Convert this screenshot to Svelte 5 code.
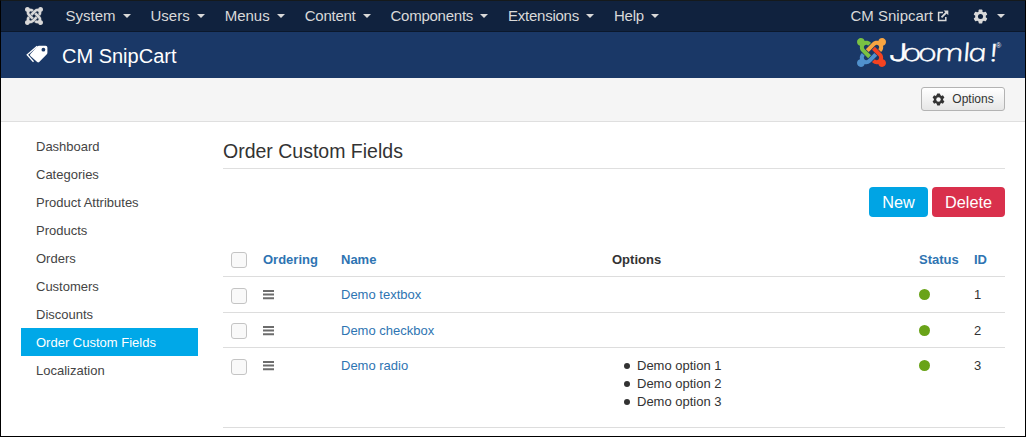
<script>
  const menus = ['System', 'Users', 'Menus', 'Content', 'Components', 'Extensions', 'Help'];
  const links = [
    'Dashboard', 'Categories', 'Product Attributes', 'Products', 'Orders',
    'Customers', 'Discounts', 'Order Custom Fields', 'Localization'
  ];
  const active = 'Order Custom Fields';
  const rows = [
    { id: 1, name: 'Demo textbox', options: [] },
    { id: 2, name: 'Demo checkbox', options: [] },
    { id: 3, name: 'Demo radio', options: ['Demo option 1', 'Demo option 2', 'Demo option 3'] }
  ];
  // One arm of the Joomla mark; the other three are quarter turns of it.
  const arm = 'M16.72 14.76L14.22 17.26l-2.37 2.37-.462.466c-1.368 1.365-3.297 1.83-5.047 1.397-.327 1.424-1.604 2.49-3.13 2.49C1.438 23.983 0 22.547 0 20.772c0-1.518 1.055-2.789 2.469-3.123-.446-1.76.016-3.705 1.396-5.08l.179-.18 2.37 2.37-.184.181c-.769.779-.769 2.024 0 2.789.771.78 2.022.78 2.787.015l.465-.465 2.367-2.371 2.502-2.506z';
  const brand = ['#5091cd', '#7ac143', '#f9a541', '#f44321'];
</script>

{#snippet mark(colors)}
  <svg class="mark" viewBox="0 0 24 24">
    {#each colors as c, i}
      <path d={arm} fill={c} transform="rotate({i * 90} 12 12)" />
    {/each}
  </svg>
{/snippet}

{#snippet gear()}
  <svg class="gear" viewBox="0 0 16 16">
    <g fill="currentColor">
      {#each [0, 60, 120] as a}
        <rect x="6" y="0.6" width="4" height="14.8" rx="0.8" transform="rotate({a} 8 8)" />
      {/each}
    </g>
    <circle cx="8" cy="8" r="4.2" fill="none" stroke="currentColor" stroke-width="3" />
    <circle class="hole" cx="8" cy="8" r="2.7" />
  </svg>
{/snippet}

<div class="page">
  <nav>
    <span class="home">{@render mark(['#d9d9d9', '#d9d9d9', '#d9d9d9', '#d9d9d9'])}</span>
    {#each menus as m, i}
      <a class="menu" class:tight={i > 2}>{m}<i class="caret"></i></a>
    {/each}
    <a class="site">CM Snipcart
      <svg class="ext" viewBox="0 0 12 12" fill="none" stroke="currentColor" stroke-width="1.5">
        <path d="M6 2.6H1.6v7.8h7.2V7" />
        <path d="M4.5 7.4L9.8 2" stroke-width="1.8" />
        <path d="M6.6 0.6H11.3V5.3z" fill="currentColor" stroke="none" />
      </svg>
    </a>
    <a class="tools">{@render gear()}<i class="caret"></i></a>
  </nav>

  <header>
    <svg class="tags" viewBox="0 0 22 18">
      <path d="M11.2 1.3L1.2 9.7l6.3 7" fill="none" stroke="#fff" stroke-width="1.3" />
      <path d="M13 0.7h6.6q1.8 0 1.8 1.8v5.2q0 1-.8 1.8l-7.4 7.5q-1 .9-2 0L4.4 10.9q-.9-1 0-1.9L11.3 1.4q.7-.7 1.7-.7z" fill="#fff" />
      <circle cx="17.4" cy="4.7" r="1.9" fill="#1a3867" />
    </svg>
    <h1>CM SnipCart</h1>
    <div class="logo">
      {@render mark(brand)}
      <svg class="word" viewBox="0 0 114 30">
        <text transform="translate(0 24) skewX(12) scale(1.4 1)" x="-0.7 9.1 20.2 32.3 52.3 56 71.4" y="0"><tspan class="j">J</tspan>oomla!</text>
        <text class="reg" x="105" y="11">®</text>
      </svg>
    </div>
  </header>

  <div class="subhead"><button class="opt">{@render gear()}Options</button></div>

  <main>
    <aside>
      {#each links as l}
        <a class:active={l === active}>{l}</a>
      {/each}
    </aside>
    <section>
      <h2>Order Custom Fields</h2>
      <div class="actions">
        <button class="new">New</button>
        <button class="delete">Delete</button>
      </div>
      <div class="row head">
        <span class="box"></span><b>Ordering</b><b>Name</b><b class="dark">Options</b><b>Status</b><b>ID</b>
      </div>
      {#each rows as r}
        <div class="row" class:even={r.id === 2} class:tall={r.options.length > 0}>
          <span class="box"></span>
          <svg class="grip" viewBox="0 0 11 10">
            <path d="M0 1H11M0 4.6H11M0 8.2H11" stroke="#6c6c6c" stroke-width="2" />
          </svg>
          <a>{r.name}</a>
          <ul>
            {#each r.options as o}<li>{o}</li>{/each}
          </ul>
          <span class="dot"></span>
          <span>{r.id}</span>
        </div>
      {/each}
    </section>
  </main>
</div>

<style>
  * { box-sizing: border-box; }
  .page {
    width: 1026px; height: 437px; overflow: hidden;
    border: 1px solid #000; border-top-color: #151a1c; background: #fff;
    font: 13px/18px "Liberation Sans", Arial, sans-serif; color: #333;
  }
  svg { display: block; flex: none; }
  nav {
    display: flex; align-items: center; height: 31px; padding-left: 24px;
    background: #10223e; border-bottom: 1px solid #0b182c;
    font-size: 15px; color: #d9d9d9;
  }
  nav a { display: flex; align-items: center; white-space: nowrap; }
  .home { width: 40.5px; }
  .home .mark { width: 18px; height: 18px; }
  .home .mark path { stroke: #d9d9d9; stroke-width: 0.3; }
  .menu { margin-right: 20px; }
  .menu.tight { letter-spacing: -0.25px; }
  .caret {
    margin-left: 7px; border: 4px solid transparent; border-bottom: 0;
    border-top-color: currentColor;
  }
  .site { margin-left: auto; gap: 4px; }
  .ext { width: 12px; height: 12px; }
  .tools { margin: 0 20px 0 24px; }
  .gear { width: 15px; height: 15px; }
  .hole { fill: #10223e; }
  .tools .caret { margin-left: 9px; }
  header {
    display: flex; align-items: center; height: 46px; padding: 0 20px 0 25px;
    background: #1a3867; color: #fff;
  }
  .tags { width: 22px; height: 18px; margin-top: -2px; }
  h1 { margin: 2px 0 0 14px; font-size: 20px; line-height: 24px; font-weight: 400; }
  .logo { display: flex; margin: -6px 0 0 auto; }
  .logo .mark { width: 29px; height: 29px; margin-top: 1px; }
  .word { width: 114px; height: 30px; margin-left: 5px; overflow: visible; }
  .word text { font: italic 300 24px "Open Sans", sans-serif; fill: #fff; stroke: #fff; stroke-width: 0.4; }
  .word .j { font-family: Inter, sans-serif; }
  .word .reg { font: 7px "Liberation Sans", sans-serif; stroke: none; }
  .subhead {
    display: flex; justify-content: flex-end; height: 44px; padding: 9px 20px 0;
    background: #f5f5f5; border-bottom: 1px solid #dfdfdf;
  }
  button { font-family: inherit; padding: 0; }
  .opt {
    display: flex; align-items: center; justify-content: center; gap: 7px;
    width: 84px; height: 24px; border: 1px solid #b3b3b3; border-radius: 3px;
    background: linear-gradient(#fff, #e6e6e6); font-size: 12px; color: #333;
  }
  .opt .gear { width: 13px; height: 13px; }
  .opt .hole { fill: #f5f5f5; }
  main { display: flex; padding: 10px 20px 0; }
  aside { width: 177px; margin-right: 25px; }
  aside a { display: block; height: 28px; padding: 6px 15px 4px; line-height: 18px; color: #444; }
  aside a.active { background: #00a8e8; color: #fff; }
  section { flex: 1; }
  h2 {
    height: 37px; margin: 0; padding-top: 7px; border-bottom: 1px solid #dfdfdf;
    font-size: 19.5px; line-height: 24px; font-weight: 400;
  }
  .actions { display: flex; justify-content: flex-end; gap: 4px; padding-top: 18px; }
  .actions button {
    height: 30px; border: 0; border-radius: 4px; color: #fff; font-size: 16.25px; line-height: 30px;
  }
  .new { width: 59px; background: #00a4e4; }
  .delete { width: 73px; background: #d9304c; }
  .row {
    display: grid; grid-template-columns: 32px 78px 271px 307px 55px 1fr;
    align-items: start; height: 36px; padding: 9px 0 0 8px; border-bottom: 1px solid #ddd;
  }
  .row.head { height: 37px; margin-top: 23px; padding-top: 11px; }
  .row.even { height: 35px; }
  .row.tall { height: 80px; }
  .row a, b { color: #2e74b2; }
  b.dark { color: #333; }
  .box { width: 16px; height: 16px; margin-top: 2px; border: 1px solid #c4c4c4; border-radius: 3px; background: #f9f9f9; }
  .head .box, .even .box { margin-top: 1px; }
  .grip { width: 11px; height: 10px; margin-top: 4px; }
  ul { margin: 0; padding: 0; list-style: none; }
  li { display: flex; align-items: center; gap: 7px; padding-left: 12px; }
  li::before { content: ""; width: 6px; height: 6px; border-radius: 50%; background: #333; }
  .dot { width: 11px; height: 11px; margin-top: 3px; border-radius: 50%; background: #69a318; }
</style>
